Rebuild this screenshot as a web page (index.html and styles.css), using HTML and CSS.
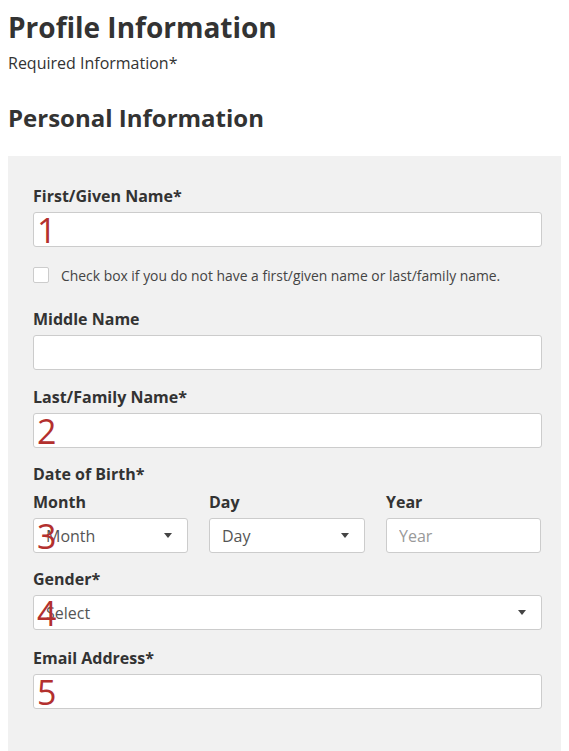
FILE: index.html
```html
<!DOCTYPE html>
<html>
<head>
<meta charset="utf-8">
<link rel="stylesheet" href="styles.css">
</head>
<body>
<h1 class="title">Profile Information</h1>
<p class="required">Required Information*</p>
<h2 class="section">Personal Information</h2>
<div class="panel">
  <div class="field">
    <label class="label">First/Given Name*</label>
    <div class="control"><input class="input" type="text"><span class="mark">1</span></div>
  </div>
  <div class="check-row">
    <span class="checkbox"></span>
    <span class="check-text">Check box if you do not have a first/given name or last/family name.</span>
  </div>
  <div class="field">
    <label class="label">Middle Name</label>
    <div class="control"><input class="input" type="text"></div>
  </div>
  <div class="field">
    <label class="label">Last/Family Name*</label>
    <div class="control"><input class="input" type="text"><span class="mark">2</span></div>
  </div>
  <div class="field field-dob">
    <label class="label">Date of Birth*</label>
    <div class="dob">
      <div class="dob-col">
        <label class="label">Month</label>
        <div class="control"><div class="select"><span>Month</span><span class="caret"></span></div><span class="mark">3</span></div>
      </div>
      <div class="dob-col">
        <label class="label">Day</label>
        <div class="control"><div class="select"><span>Day</span><span class="caret"></span></div></div>
      </div>
      <div class="dob-col">
        <label class="label">Year</label>
        <div class="control"><input class="input" type="text" placeholder="Year"></div>
      </div>
    </div>
  </div>
  <div class="field">
    <label class="label">Gender*</label>
    <div class="control"><div class="select"><span>Select</span><span class="caret"></span></div><span class="mark">4</span></div>
  </div>
  <div class="field field-email">
    <label class="label">Email Address*</label>
    <div class="control"><input class="input" type="text"><span class="mark">5</span></div>
  </div>
</div>
</body>
</html>
```
FILE: styles.css
```css
* { box-sizing: border-box; }
html { overflow: hidden; scrollbar-width: none; }
::-webkit-scrollbar { display: none; width: 0; height: 0; }
body {
  margin: 8px;
  font-family: "Open Sans", "Liberation Sans", sans-serif;
  color: #333;
  background: #fff;
}
.title {
  margin: 0;
  font-size: 28px;
  line-height: 38px;
  font-weight: 700;
  color: #333;
}
.required {
  margin: 5px 0 0;
  font-size: 16px;
  line-height: 24px;
  color: #333;
}
.section {
  margin: 27px 0 0;
  font-size: 24px;
  line-height: 32px;
  font-weight: 700;
}
.panel {
  margin-top: 22px;
  margin-right: -7px;
  background: #f1f1f1;
  padding: 29px 26px 40px 25px;
}
.field { margin-bottom: 16px; }
.field-dob { margin-top: -1px; margin-bottom: 15px; }
.field-email { margin-top: 17px; }
.label {
  display: block;
  font-size: 16px;
  line-height: 22px;
  font-weight: 700;
  color: #333;
  margin-bottom: 5px;
}
.field-dob > .label { margin-bottom: 6px; }
.control { position: relative; }
.input, .select {
  display: flex;
  align-items: center;
  width: 100%;
  height: 35px;
  border: 1px solid #ccc;
  border-radius: 3px;
  background: #fff;
  font-family: inherit;
  font-size: 16px;
  color: #555;
  padding: 0 12px;
  outline: none;
}
.input::placeholder { color: #999; }
.select { justify-content: space-between; }
.caret {
  width: 0; height: 0;
  border-left: 4px solid transparent;
  border-right: 4px solid transparent;
  border-top: 5px solid #444;
  margin-right: 3px;
}
.mark {
  position: absolute;
  left: 4px;
  top: -1px;
  font-size: 34px;
  line-height: 38px;
  color: #b3302e;
  pointer-events: none;
}
.check-row {
  display: flex;
  align-items: center;
  margin: 0 0 21px;
  height: 24px;
}
.checkbox {
  width: 16px; height: 16px;
  border: 1px solid #ccc;
  border-radius: 2px;
  background: #fff;
  margin-right: 12px;
}
.check-text { font-size: 13.9px; color: #444; }
.dob {
  display: grid;
  grid-template-columns: 155px 156px 155px;
  column-gap: 21px;
}
```
